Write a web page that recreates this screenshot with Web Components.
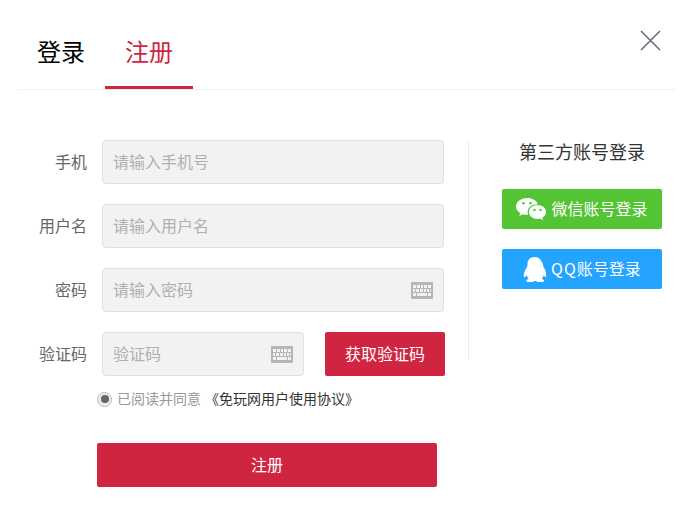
<!DOCTYPE html>
<html lang="zh">
<head>
<meta charset="utf-8">
<title>注册</title>
<style>
    html, body { margin: 0; background: #fff; }
    body { font-family: "Noto Sans CJK SC", "Liberation Sans", sans-serif; }
</style>
</head>
<body>
<auth-dialog>
    <auth-tabs slot="head"></auth-tabs>
    <register-form slot="form"></register-form>
    <social-panel slot="side"></social-panel>
</auth-dialog>

<script>
const KEYBOARD_ICON = `<svg width="22" height="17" viewBox="0 0 22 17"><path fill="#b6b6b6" fill-rule="evenodd" d="M0 0h22v17H0zM2 3v3h3V3zM6 3v3h3V3zM10 3v3h2V3zM13 3v3h3V3zM17 3v3h3V3zM2 7v3h2V7zM5 7v3h3V7zM9 7v3h3V7zM13 7v3h2V7zM16 7v3h2V7zM19 7v3h1V7zM2 11v3h3v-3zM6 11v3h10v-3zM17 11v3h3v-3z"/></svg>`;

class AuthDialog extends HTMLElement {
    constructor() {
        super();
        this.attachShadow({ mode: 'open' });
    }

    connectedCallback() {
        this.shadowRoot.innerHTML = `
            <style>
                :host { display: block; width: 696px; height: 527px; position: relative; overflow: hidden; background: #fff; }
                .head { margin: 0 20px 0 17px; }
                .body { display: flex; padding: 50px 0 0 0; }
                .close {
                    position: absolute; top: 30px; left: 640px; width: 21px; height: 21px;
                    padding: 0; border: 0; background: none; cursor: pointer;
                }
                .close svg { display: block; }
            </style>
            <div class="head"><slot name="head"></slot></div>
            <button class="close" aria-label="close">
                <svg width="21" height="21" viewBox="0 0 21 21"><path d="M1 1l19 19M20 1L1 20" stroke="#6b6b76" stroke-width="1.600" fill="none"/></svg>
            </button>
            <div class="body">
                <slot name="form"></slot>
                <slot name="side"></slot>
            </div>
        `;
    }
}

class AuthTabs extends HTMLElement {
    constructor() {
        super();
        this.attachShadow({ mode: 'open' });
    }

    connectedCallback() {
        this.shadowRoot.innerHTML = `
            <style>
                :host { display: flex; height: 89px; border-bottom: 1px solid #f2f2f2; }
                .tab {
                    box-sizing: border-box; height: 89px; padding: 0 20px; font-size: 24px;
                    color: #000; border-bottom: 3px solid transparent;
                    line-height: 102px; overflow: hidden;
                }
                .tab.on { color: #d02541; border-bottom-color: #d02541; }
            </style>
            <div class="tab">登录</div>
            <div class="tab on">注册</div>
        `;
    }
}

class FormField extends HTMLElement {
    constructor() {
        super();
        this.attachShadow({ mode: 'open' });
    }

    connectedCallback() {
        const keyboard = this.hasAttribute('keyboard') ? KEYBOARD_ICON : '';
        const width = this.getAttribute('input-width') || '342';
        this.shadowRoot.innerHTML = `
            <style>
                :host { display: flex; align-items: center; height: 44px; font-size: 16px; }
                .label { width: 87px; text-align: right; color: #666; flex: none; padding-bottom: 2px; }
                .box {
                    box-sizing: border-box; width: ${width}px; height: 44px; margin-left: 15px;
                    display: flex; align-items: center; justify-content: space-between;
                    padding: 0 10px 0 10px; background: #f2f2f2;
                    border: 1px solid #e0e0e0; border-radius: 4px; flex: none;
                }
                input {
                    flex: 1; min-width: 0; border: 0; outline: 0; padding: 0 0 2px; background: none;
                    font: inherit; color: #333;
                }
                input::placeholder { color: #b0b0b0; opacity: 1; }
                svg { display: block; flex: none; }
                ::slotted(*) { margin-left: 21px; }
            </style>
            <span class="label">${this.getAttribute('label')}</span>
            <div class="box">
                <input type="text" placeholder="${this.getAttribute('placeholder')}">
                ${keyboard}
            </div>
            <slot></slot>
        `;
    }
}

class RegisterForm extends HTMLElement {
    constructor() {
        super();
        this.attachShadow({ mode: 'open' });
    }

    connectedCallback() {
        this.shadowRoot.innerHTML = `
            <style>
                :host { display: flex; flex-direction: column; gap: 20px; width: 468px; flex: none; box-sizing: border-box; }
                .code {
                    box-sizing: border-box; width: 120px; height: 44px; border: 0; border-radius: 2px;
                    background: #d02541; color: #fff; font: inherit; padding: 0 0 2px;
                }
                .agree {
                    display: flex; align-items: center; height: 20px; margin: -7px 0 0 97px;
                    font-size: 14px; color: #999; white-space: nowrap;
                }
                .agree span.text { margin-top: -2px; }
                .radio {
                    box-sizing: border-box; width: 15px; height: 15px; margin-right: 5px; border-radius: 50%;
                    background: #ececec; border: 1px solid #bbb; display: flex; align-items: center; justify-content: center;
                }
                .radio i { width: 8px; height: 8px; border-radius: 50%; background: #666; }
                .agree b { font-weight: 400; color: #333; margin-left: 4px; }
                .submit {
                    box-sizing: border-box; width: 340px; height: 44px; margin: 14px 0 0 97px;
                    border: 0; border-radius: 2px; background: #d02541; color: #fff;
                    font: inherit; font-size: 16px; padding: 0 0 2px;
                }
            </style>
            <form-field label="手机" placeholder="请输入手机号"></form-field>
            <form-field label="用户名" placeholder="请输入用户名"></form-field>
            <form-field label="密码" placeholder="请输入密码" keyboard></form-field>
            <form-field label="验证码" placeholder="验证码" keyboard input-width="202">
                <button class="code" type="button">获取验证码</button>
            </form-field>
            <div class="agree"><span class="radio"><i></i></span><span class="text">已阅读并同意<b>《免玩网用户使用协议》</b></span></div>
            <button class="submit" type="button">注册</button>
        `;
    }
}

class SocialPanel extends HTMLElement {
    constructor() {
        super();
        this.attachShadow({ mode: 'open' });
    }

    connectedCallback() {
        this.shadowRoot.innerHTML = `
            <style>
                :host {
                    display: flex; flex-direction: column; align-items: center; box-sizing: border-box;
                    width: 227px; height: 220px; flex: none; border-left: 1px solid #eee;
                }
                h3 { margin: 0 0 23px; height: 26px; font-size: 18px; line-height: 22px; font-weight: 400; color: #333; }
                .btn {
                    display: flex; align-items: center; justify-content: center; width: 160px; height: 40px;
                    border-radius: 2px; color: #fff; font-size: 16px; margin-bottom: 20px; white-space: nowrap;
                }
                .btn span { padding-bottom: 2px; }
                .wx { background: #53c434; }
                .qq { background: #25a4ff; }
                .qq em { font-style: normal; letter-spacing: 1px; }
                svg { display: block; flex: none; margin-right: 5px; }
            </style>
            <h3>第三方账号登录</h3>
            <div class="btn wx">
                <svg width="30" height="24" viewBox="0 0 30 24">
                    <path fill="#fff" d="M11 1C5 1 0 4.800 0 9.500c0 2.700 1.600 5 4.200 6.600L3.200 19l3.400-1.800c1.300.4 2.700.6 4.100.6.500 0 1 0 1.400-.1-.3-.9-.5-1.800-.5-2.700 0-4.300 4.100-7.800 9.300-7.800h.9C20.700 3.500 16.300 1 11 1z"/>
                    <path fill="#fff" d="M30 15c0-4-3.800-7-8.500-7S13 11 13 15s3.800 7 8.500 7c1 0 1.900-.1 2.800-.4l2.700 1.600-.7-2.500c2.300-1.400 3.700-3.400 3.700-5.700z"/>
                    <circle cx="7.500" cy="6.300" r="1.300" fill="#53c434"/><circle cx="14.500" cy="6.300" r="1.300" fill="#53c434"/>
                    <circle cx="18.500" cy="13" r="1.200" fill="#53c434"/><circle cx="24.500" cy="13" r="1.200" fill="#53c434"/>
                </svg>
                <span>微信账号登录</span>
            </div>
            <div class="btn qq">
                <svg width="23" height="25" viewBox="0 0 23 25">
                    <path fill="#fff" d="M11.500 0C6.600 0 4.500 3.500 4.500 7.500c0 1-.1 1.700-.5 2.500-1 2-2.400 4-3 6.500-.5 2 0 3.700.5 3.700.8 0 1.700-1.200 2.300-2.200.3 1.600 1 2.900 2 3.800-1.400.5-2.600 1.200-2.600 2 0 1 1.800 1.400 4 1.400 2 0 3.400-.5 4.300-1.300.3.100 1.200.1 1.500 0 .9.800 2.300 1.300 4.300 1.300 2.200 0 4-.4 4-1.400 0-.8-1.200-1.500-2.600-2 1-.9 1.700-2.200 2-3.800.6 1 1.500 2.200 2.300 2.200.5 0 1-1.700.5-3.700-.6-2.500-2-4.500-3-6.500-.4-.8-.5-1.500-.5-2.500C18.500 3.500 16.400 0 11.500 0z"/>
                </svg>
                <span><em>QQ</em>账号登录</span>
            </div>
        `;
    }
}

customElements.define('auth-dialog', AuthDialog);
customElements.define('auth-tabs', AuthTabs);
customElements.define('form-field', FormField);
customElements.define('register-form', RegisterForm);
customElements.define('social-panel', SocialPanel);
</script>
</body>
</html>
